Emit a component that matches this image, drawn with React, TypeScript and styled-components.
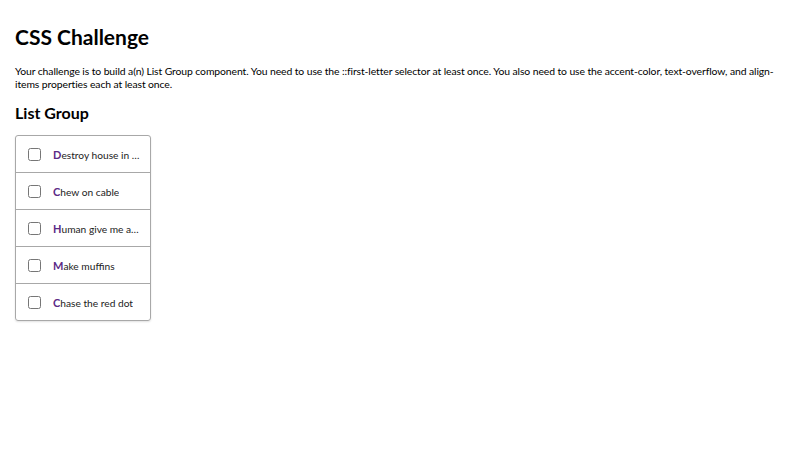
import React from 'react';
import styled, { createGlobalStyle } from 'styled-components';

const GlobalStyle = createGlobalStyle`
  body {
    margin: 0;
    background: #ffffff;
    color: #000000;
    font-family: Lato, "Open Sans", sans-serif;
  }
`;

const Page = styled.main`
  padding: 24px 15px;
`;

const Title = styled.h1`
  margin: 0 0 15px;
  font-size: 21px;
  font-weight: 700;
  line-height: 26px;
`;

const Intro = styled.p`
  margin: 0 0 12px;
  font-size: 10.4px;
  letter-spacing: -0.1px;
  line-height: 13px;
`;

const SubTitle = styled.h2`
  margin: 0 0 12px;
  font-size: 16px;
  font-weight: 700;
  line-height: 20px;
`;

const List = styled.ul`
  list-style: none;
  margin: 0;
  padding: 0;
  width: 134px;
  border: 1px solid #a8a8a8;
  border-radius: 3px;
  box-shadow: 0 1px 2px rgba(0, 0, 0, 0.12);
`;

const Item = styled.li`
  display: flex;
  align-items: center;
  gap: 12px;
  height: 36px;
  padding: 0 8px 0 12px;
  border-bottom: 1px solid #a8a8a8;

  &:last-child {
    border-bottom: none;
  }
`;

const Check = styled.input.attrs({ type: 'checkbox' })`
  margin: 0;
  width: 13px;
  height: 13px;
  flex-shrink: 0;
  accent-color: #5b2a86;
`;

const Label = styled.span`
  font-size: 10.2px;
  white-space: nowrap;
  overflow: hidden;
  text-overflow: ellipsis;
  color: #222222;

  &::first-letter {
    color: #5b2a86;
    font-weight: 700;
    font-size: 11px;
  }
`;

const tasks = [
  'Destroy house in the middle of the night',
  'Chew on cable',
  'Human give me attention meow',
  'Make muffins',
  'Chase the red dot',
];

export default function App() {
  return (
    <>
      <GlobalStyle />
      <Page>
        <Title>CSS Challenge</Title>
        <Intro>
          Your challenge is to build a(n) List Group component. You need to use the ::first-letter
          selector at least once. You also need to use the accent-color, text-overflow, and
          align-items properties each at least once.
        </Intro>
        <SubTitle>List Group</SubTitle>
        <List>
          {tasks.map((task) => (
            <Item key={task}>
              <Check />
              <Label>{task}</Label>
            </Item>
          ))}
        </List>
      </Page>
    </>
  );
}
